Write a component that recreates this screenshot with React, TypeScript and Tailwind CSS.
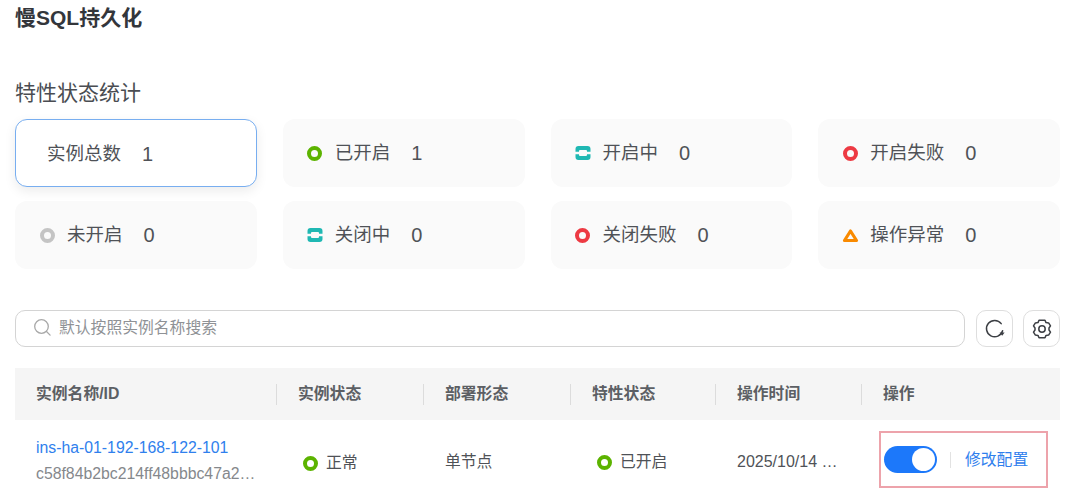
type Kind = "none" | "green" | "gray" | "teal" | "red" | "warn";

function StatusIcon({ kind }: { kind: Kind }) {
  if (kind === "none") return null;
  if (kind === "teal") {
    return (
      <svg width="16" height="16" viewBox="0 0 16 16" fill="none" className="shrink-0">
        <path d="M.5 6.8V4a3 3 0 0 1 3-3h9a3 3 0 0 1 3 3v2.8H12V6a1 1 0 0 0-1-1H5a1 1 0 0 0-1 1v.8z" fill="#1fb8b3" />
        <path d="M15.5 9.2V12a3 3 0 0 1-3 3h-9a3 3 0 0 1-3-3V9.2H4V10a1 1 0 0 0 1 1h6a1 1 0 0 0 1-1v-.8z" fill="#1fb8b3" />
      </svg>
    );
  }
  if (kind === "warn") {
    return (
      <svg width="17" height="15" viewBox="0 0 17 15" fill="none" className="shrink-0">
        <path d="M8.5 3 14.5 12.5h-12z" stroke="#f98a00" strokeWidth="3.2" strokeLinejoin="round" />
      </svg>
    );
  }
  const color = kind === "green" ? "border-[#5cb300]" : kind === "gray" ? "border-[#c4c4c4]" : "border-[#ed3a43]";
  return <span className={`inline-block h-[15px] w-[15px] shrink-0 rounded-full border-4 ${color}`} />;
}

const cards: { label: string; value: number; kind: Kind }[] = [
  { label: "实例总数", value: 1, kind: "none" },
  { label: "已开启", value: 1, kind: "green" },
  { label: "开启中", value: 0, kind: "teal" },
  { label: "开启失败", value: 0, kind: "red" },
  { label: "未开启", value: 0, kind: "gray" },
  { label: "关闭中", value: 0, kind: "teal" },
  { label: "关闭失败", value: 0, kind: "red" },
  { label: "操作异常", value: 0, kind: "warn" },
];

const columns = ["实例名称/ID", "实例状态", "部署形态", "特性状态", "操作时间", "操作"];

export default function App() {
  return (
    <div className="h-[491px] w-[1080px] overflow-hidden bg-white px-[15px] font-['Liberation_Sans','Noto_Sans_CJK_SC',sans-serif] text-[#4f5257]">
      <h1 className="pt-[4px] text-[21px] leading-[28px] font-bold text-[#33363b]">慢SQL持久化</h1>

      <h2 className="mt-[47px] text-[21px] leading-[28px] text-[#4a4d52]">特性状态统计</h2>

      <div className="mt-[12px] grid w-[1045px] grid-cols-4 gap-x-[26px] gap-y-[14px]">
        {cards.map((card, i) => (
          <div
            key={card.label}
            className={
              i === 0
                ? "flex h-[68px] items-center rounded-[12px] border border-[#78aef0] bg-white pt-[2px] pl-[31px] shadow-[0_4px_12px_rgba(0,0,0,0.08)]"
                : "flex h-[68px] items-center rounded-[12px] bg-[#fafafa] pl-[24px]"
            }
          >
            {i > 0 && (
              <span className="mr-[12px] flex w-[16px] justify-center">
                <StatusIcon kind={card.kind} />
              </span>
            )}
            <span className="text-[18.5px]">{card.label}</span>
            <span className="ml-[21px] text-[20px]">{card.value}</span>
          </div>
        ))}
      </div>

      <div className="mt-[41px] flex w-[1045px] items-center">
        <div className="flex h-[37px] w-[950px] items-center rounded-[10px] border border-[#d4d4d4] pb-[2px] pl-[17px]">
          <svg width="19" height="19" viewBox="0 0 19 19" fill="none" stroke="#a8a8a8" strokeWidth="1.3" strokeLinecap="round">
            <circle cx="8.5" cy="8.5" r="6.8" />
            <path d="m13.5 13.5 3.6 3.6" />
          </svg>
          <span className="ml-[7px] text-[15.8px] text-[#8f9296]">默认按照实例名称搜索</span>
        </div>
        <button className="ml-[11px] flex h-[37px] w-[37px] items-center justify-center rounded-[10px] border border-[#dedede]">
          <svg width="22" height="22" viewBox="0 0 22 22" fill="none" stroke="#3c3f44" strokeWidth="1.5" strokeLinecap="round">
            <path d="M18.6 12.8A8.2 8.2 0 1 1 17.2 5.6" />
            <path d="M20.6 14.6h-5l2.6 3.2z" fill="#3c3f44" stroke="none" />
          </svg>
        </button>
        <button className="ml-[10px] flex h-[37px] w-[37px] items-center justify-center rounded-[10px] border border-[#dedede]">
          <svg width="22" height="22" viewBox="0 0 22 22" fill="none" stroke="#3c3f44" strokeWidth="1.5" strokeLinejoin="round">
            <path d="M8 2.2h6l1 2.4 2.6.3 1.9 2.9-1.5 2.2v2l1.5 2.2-1.9 2.9-2.6.3-1 2.4H8l-1-2.4-2.6-.3-1.9-2.9L4 12v-2L2.5 7.8l1.9-2.9L7 4.6z" />
            <circle cx="11" cy="11" r="3.2" />
          </svg>
        </button>
      </div>

      <div className="mt-[21px] grid h-[52px] w-[1045px] grid-cols-[262px_147px_147px_145px_146px_198px] items-center bg-[#f5f5f5] text-[15.8px] font-bold text-[#5c5f64]">
        {columns.map((col, i) => (
          <div key={col} className={i === 5 ? "flex h-[21px] items-center pl-[21px]" : "flex h-[21px] items-center border-r border-[#dcdcdc] pl-[21px]"}>
            {col}
          </div>
        ))}
      </div>

      <div className="grid w-[1045px] grid-cols-[262px_147px_147px_145px_146px_198px] items-start text-[15.8px] leading-[24px] text-[#4f5257]">
        <div className="pt-[18px] pl-[21px] text-[15.8px] leading-[20px]">
          <div className="text-[#2f80ed]">ins-ha-01-192-168-122-101</div>
          <div className="mt-[6px] text-[#85888c]">c58f84b2bc214ff48bbbc47a2…</div>
        </div>
        <div className="flex items-center gap-[8px] pt-[31px] pl-[26px]">
          <StatusIcon kind="green" />
          <span>正常</span>
        </div>
        <div className="pt-[30px] pl-[21px]">单节点</div>
        <div className="flex items-center gap-[8px] pt-[30px] pl-[26px]">
          <StatusIcon kind="green" />
          <span>已开启</span>
        </div>
        <div className="pt-[30px] pl-[21px] text-[16px]">2025/10/14 …</div>
        <div className="pt-[11px]">
          <div className="ml-[17px] flex h-[57px] w-[169px] items-center border-2 border-[#eda3ab] pl-[3px]">
            <span className="flex h-[27px] w-[53px] items-center justify-end rounded-full bg-[#1c78fa] pr-[2px]">
              <span className="h-[23px] w-[23px] rounded-full bg-white" />
            </span>
            <span className="ml-[13px] h-[16px] w-px bg-[#e2e2e2]" />
            <span className="ml-[14px] text-[#2f80ed]">修改配置</span>
          </div>
        </div>
      </div>
    </div>
  );
}
